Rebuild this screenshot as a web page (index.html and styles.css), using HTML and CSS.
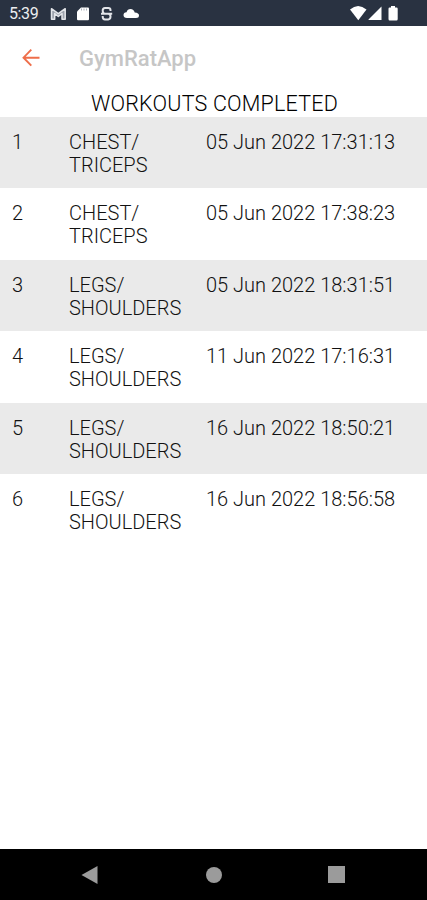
FILE: index.html
```html
<!DOCTYPE html>
<html lang="en">
<head>
  <meta charset="UTF-8" />
  <title>GymRatApp</title>
  <link rel="stylesheet" href="styles.css">
</head>
<body>

  <div class="status-bar">
    <span class="clock">5:39</span>
    <svg class="status-left" width="92" height="26" viewBox="0 0 92 26">
      <!-- mail -->
      <path d="M1.500 19.300V8.700L8.300 13.700L15.200 8.700V19.300H12V13.500L8.300 16.500L4.700 13.500V19.300Z" fill="#9ba1ab" stroke="#e3e5e9" stroke-width="1.500" stroke-linejoin="round" />
      <!-- sd card -->
      <path d="M31 7.500H38Q39 7.500 39 8.500V19Q39 20.300 38 20.300H28Q27 20.300 27 19V11.500Z" fill="#fff" />
      <path d="M31.500 8.500V10.500M34 8.500V10.500M36.500 8.500V10.500" stroke="#aab0b9" stroke-width="1" />
      <!-- s badge -->
      <path d="M60.500 11V10.300Q60.500 8 58.300 8H55Q52.700 8 52.700 10.500Q52.700 13.700 55 13.700H58.200Q60.500 13.700 60.500 16.600Q60.500 19.400 58.300 19.400H55Q52.700 19.400 52.700 16.800V16M51 13.700H62.200" fill="none" stroke="#e3e5e9" stroke-width="2" />
      <!-- cloud -->
      <path d="M77 18Q73.500 18 73.500 15Q73.500 12.500 76.500 12.200Q77.500 9 80.500 9Q83.800 9 84.700 12.500Q89 12.800 89 15.500Q89 18 86 18Z" fill="#fff" />
    </svg>
    <svg class="status-right" width="52" height="26" viewBox="0 0 52 26">
      <path d="M0 9.500Q8 2.500 16.500 9.500L8.300 20.300Z" fill="#fff" />
      <path d="M18.500 20V19.500L31.500 6.500V20Z" fill="#fff" />
      <path d="M41 6H45V7.500H46.500Q47.700 7.500 47.700 8.700V19Q47.700 20.500 46.500 20.500H39.700Q38.500 20.500 38.500 19V8.700Q38.500 7.500 39.700 7.500H41Z" fill="#fff" />
    </svg>
  </div>

  <div class="toolbar">
    <svg class="back" width="18" height="18" viewBox="0 0 18 18">
      <path d="M17.500 8.700H1.500M9.300 0.700L1.500 8.700L9.300 16.700" fill="none" stroke="#ee6e4a" stroke-width="1.900" />
    </svg>
    <span class="app-name">GymRatApp</span>
  </div>

  <div class="content">
    <div class="heading">WORKOUTS COMPLETED</div>
    <div class="row">
      <div class="num">1</div>
      <div class="workout">CHEST/<br>TRICEPS</div>
      <div class="date">05 Jun 2022 17:31:13</div>
    </div>
    <div class="row">
      <div class="num">2</div>
      <div class="workout">CHEST/<br>TRICEPS</div>
      <div class="date">05 Jun 2022 17:38:23</div>
    </div>
    <div class="row">
      <div class="num">3</div>
      <div class="workout">LEGS/<br>SHOULDERS</div>
      <div class="date">05 Jun 2022 18:31:51</div>
    </div>
    <div class="row">
      <div class="num">4</div>
      <div class="workout">LEGS/<br>SHOULDERS</div>
      <div class="date">11 Jun 2022 17:16:31</div>
    </div>
    <div class="row">
      <div class="num">5</div>
      <div class="workout">LEGS/<br>SHOULDERS</div>
      <div class="date">16 Jun 2022 18:50:21</div>
    </div>
    <div class="row">
      <div class="num">6</div>
      <div class="workout">LEGS/<br>SHOULDERS</div>
      <div class="date">16 Jun 2022 18:56:58</div>
    </div>
  </div>

  <div class="nav-bar">
    <svg width="18" height="20" viewBox="0 0 18 20">
      <path d="M0.500 10L16.500 1V19Z" fill="#9b9b9b" />
    </svg>
    <div class="home"></div>
    <div class="recent"></div>
  </div>

</body>
</html>
```

FILE: styles.css
```css
body {
  margin: 0;
  height: 900px;
  display: flex;
  flex-direction: column;
  font-family: Roboto, "Liberation Sans", sans-serif;
  background: white;
  overflow: hidden;
}
.status-bar {
  display: flex;
  height: 26px;
  background: #293241;
}
.clock {
  width: 41px;
  padding-left: 9px;
  font-size: 16px;
  line-height: 28px;
  letter-spacing: -0.4px;
  color: #eceef0;
}
.status-right {
  margin-left: auto;
  margin-right: 25px;
}
.toolbar {
  display: flex;
  align-items: center;
  height: 63px;
  padding-left: 22px;
}
.app-name {
  margin-left: 39px;
  padding-top: 1px;
  font-size: 22px;
  font-weight: 500;
  color: #c6c6c6;
}
.content {
  flex: 1;
}
.heading {
  height: 27.5px;
  line-height: 29px;
  font-size: 21.5px;
  font-weight: 300;
  letter-spacing: 0.2px;
  padding-left: 2px;
  text-align: center;
  color: #000;
}
.row {
  display: flex;
  box-sizing: border-box;
  height: 71.5px;
  padding: 14px 0 0 12px;
  font-size: 20px;
  font-weight: 300;
  line-height: 23px;
  color: #111;
}
.row:nth-child(even) {
  background: #eaeaea;
}
.num {
  width: 57px;
}
.workout {
  width: 137px;
}
.date {
  white-space: nowrap;
}
.nav-bar {
  display: flex;
  align-items: center;
  justify-content: space-between;
  height: 51px;
  padding: 0 82px 0 81px;
  background: black;
}
.home {
  width: 16px;
  height: 16px;
  border-radius: 50%;
  background: #9b9b9b;
}
.recent {
  width: 17px;
  height: 17px;
  background: #9b9b9b;
}
```
